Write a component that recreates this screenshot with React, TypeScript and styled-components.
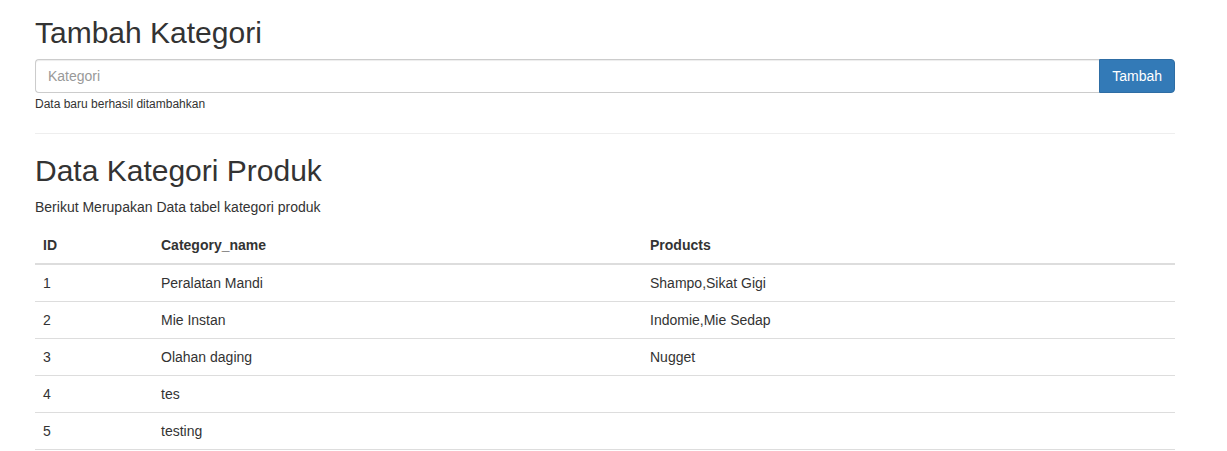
import React from "react";
import styled, { createGlobalStyle } from "styled-components";

const GlobalStyle = createGlobalStyle`
  html, body {
    margin: 0;
    padding: 0;
    background: #fff;
    overflow: hidden;
  }
  body {
    font-family: "Liberation Sans", Arial, Helvetica, sans-serif;
    font-size: 14px;
    line-height: 1.42857143;
    color: #333;
  }
  * { box-sizing: border-box; }
`;

const Page = styled.div`
  width: 1140px;
  margin-left: 35px;
  padding-top: 16px;
`;

const Heading = styled.h2`
  font-family: "Liberation Sans", Arial, Helvetica, sans-serif;
  font-size: 30px;
  font-weight: 500;
  line-height: 1.1;
  margin: 0 0 10px;
  color: #333;
`;

const InputGroup = styled.div`
  display: flex;
  width: 100%;
`;

const TextInput = styled.input`
  flex: 1;
  height: 34px;
  padding: 6px 12px;
  font-family: inherit;
  font-size: 14px;
  line-height: 1.42857143;
  color: #555;
  background: #fff;
  border: 1px solid #ccc;
  border-right: 0;
  border-radius: 4px 0 0 4px;
  box-shadow: inset 0 1px 1px rgba(0, 0, 0, 0.075);
  outline: none;
  &::placeholder { color: #999; }
`;

const PrimaryButton = styled.button`
  height: 34px;
  padding: 6px 12px;
  font-family: inherit;
  font-size: 14px;
  line-height: 1.42857143;
  color: #fff;
  background: #337ab7;
  border: 1px solid #2e6da4;
  border-radius: 0 4px 4px 0;
  cursor: pointer;
`;

const HelpText = styled.div`
  margin-top: 4px;
  font-size: 12px;
  line-height: 14px;
  color: #333;
`;

const Divider = styled.hr`
  margin: 22px 0 20px;
  border: 0;
  border-top: 1px solid #eee;
  height: 0;
`;

const Lead = styled.p`
  margin: 0 0 10px;
`;

const Table = styled.table`
  width: 100%;
  border-collapse: separate;
  border-spacing: 0;
  table-layout: fixed;
`;

const HeadCell = styled.th`
  padding: 8px;
  text-align: left;
  font-weight: bold;
  line-height: 20px;
  vertical-align: bottom;
  border-bottom: 2px solid #ddd;
`;

const Cell = styled.td`
  padding: 8px;
  line-height: 20px;
  vertical-align: top;
  border-bottom: 1px solid #ddd;
`;

const rows = [
  { id: 1, name: "Peralatan Mandi", products: "Shampo,Sikat Gigi" },
  { id: 2, name: "Mie Instan", products: "Indomie,Mie Sedap" },
  { id: 3, name: "Olahan daging", products: "Nugget" },
  { id: 4, name: "tes", products: "" },
  { id: 5, name: "testing", products: "" },
];

export default function App() {
  return (
    <>
      <GlobalStyle />
      <Page>
        <Heading>Tambah Kategori</Heading>
        <InputGroup>
          <TextInput type="text" placeholder="Kategori" />
          <PrimaryButton type="button">Tambah</PrimaryButton>
        </InputGroup>
        <HelpText>Data baru berhasil ditambahkan</HelpText>
        <Divider />
        <Heading>Data Kategori Produk</Heading>
        <Lead>Berikut Merupakan Data tabel kategori produk</Lead>
        <Table>
          <colgroup>
            <col style={{ width: 118 }} />
            <col style={{ width: 489 }} />
            <col />
          </colgroup>
          <thead>
            <tr>
              <HeadCell>ID</HeadCell>
              <HeadCell>Category_name</HeadCell>
              <HeadCell>Products</HeadCell>
            </tr>
          </thead>
          <tbody>
            {rows.map((r) => (
              <tr key={r.id}>
                <Cell>{r.id}</Cell>
                <Cell>{r.name}</Cell>
                <Cell>{r.products}</Cell>
              </tr>
            ))}
          </tbody>
        </Table>
      </Page>
    </>
  );
}
